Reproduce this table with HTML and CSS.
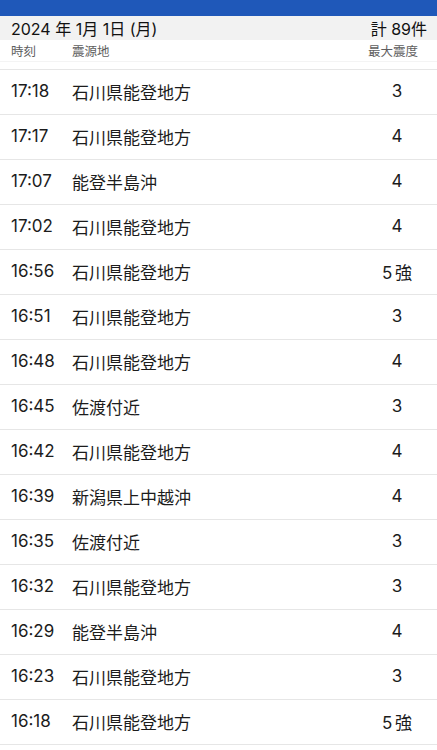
FILE: index.html
```html
<!DOCTYPE html>
<html lang="ja">
<head>
<meta charset="utf-8">
<link rel="stylesheet" href="styles.css">
</head>
<body>
<div class="topbar"></div>
<div class="datebar"><span>2024 年 1月 1日 (月)</span><span>計 89件</span></div>
<div class="colhead"><span class="c-time">時刻</span><span class="c-place">震源地</span><span class="c-int">最大震度</span></div>
<div class="gap"></div>
<ul class="list">
<li><span class="time">17:18</span><span class="place">石川県能登地方</span><span class="int">3</span></li>
<li><span class="time">17:17</span><span class="place">石川県能登地方</span><span class="int">4</span></li>
<li><span class="time">17:07</span><span class="place">能登半島沖</span><span class="int">4</span></li>
<li><span class="time">17:02</span><span class="place">石川県能登地方</span><span class="int">4</span></li>
<li><span class="time">16:56</span><span class="place">石川県能登地方</span><span class="int">5 強</span></li>
<li><span class="time">16:51</span><span class="place">石川県能登地方</span><span class="int">3</span></li>
<li><span class="time">16:48</span><span class="place">石川県能登地方</span><span class="int">4</span></li>
<li><span class="time">16:45</span><span class="place">佐渡付近</span><span class="int">3</span></li>
<li><span class="time">16:42</span><span class="place">石川県能登地方</span><span class="int">4</span></li>
<li><span class="time">16:39</span><span class="place">新潟県上中越沖</span><span class="int">4</span></li>
<li><span class="time">16:35</span><span class="place">佐渡付近</span><span class="int">3</span></li>
<li><span class="time">16:32</span><span class="place">石川県能登地方</span><span class="int">3</span></li>
<li><span class="time">16:29</span><span class="place">能登半島沖</span><span class="int">4</span></li>
<li><span class="time">16:23</span><span class="place">石川県能登地方</span><span class="int">3</span></li>
<li><span class="time">16:18</span><span class="place">石川県能登地方</span><span class="int">5 強</span></li>
</ul>
</body>
</html>
```
FILE: styles.css
```css
* { box-sizing: border-box; }
html, body { margin: 0; padding: 0; background: #fff; }
body {
  font-family: "Inter", "Noto Sans CJK JP", sans-serif;
  color: #1c1c1c;
  width: 437px;
  overflow: hidden;
}
.topbar { height: 16px; background: #1f58b9; }
.datebar {
  height: 24px;
  background: #f2f2f2;
  display: flex;
  justify-content: space-between;
  align-items: center;
  padding: 0 10px 0 11px;
  font-size: 16px;
  font-weight: 400;
  color: #111;
}
.colhead {
  height: 22px;
  display: flex;
  align-items: center;
  padding: 0 19px 0 11px;
  font-size: 12.5px;
  color: #5e5e5e;
  border-bottom: 1px solid #f4f4f4;
}
.c-time { width: 61px; }
.c-place { flex: 1; }
.gap { height: 8px; border-bottom: 1px solid #e6e6e6; }
.list { list-style: none; margin: 0; padding: 0; }
.list li {
  height: 45px;
  display: flex;
  align-items: center;
  padding: 0 0 2px 11px;
  border-bottom: 1px solid #e6e6e6;
  font-size: 17px;
}
.time { width: 61px; }
.place { flex: 1; }
.int { width: 60px; text-align: center; margin-right: 10px; word-spacing: -2px; }
```
